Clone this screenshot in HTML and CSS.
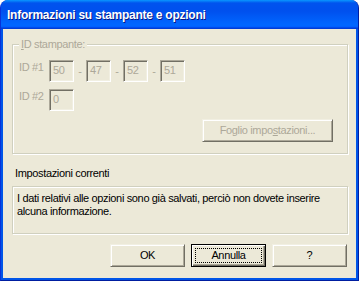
FILE: index.html
```html
<!DOCTYPE html>
<html>
<head>
<meta charset="utf-8">
<link rel="stylesheet" href="styles.css">
</head>
<body>
<div class="window">
  <div class="titlebar">Informazioni su stampante e opzioni</div>
  <div class="client">
    <div class="group">
      <span class="legend"><u>I</u>D stampante:</span>
      <div class="row row-first">
        <span class="lbl">ID #1</span>
        <span class="edit">50</span><span class="dash">-</span>
        <span class="edit">47</span><span class="dash">-</span>
        <span class="edit">52</span><span class="dash">-</span>
        <span class="edit">51</span>
      </div>
      <div class="row row-second">
        <span class="lbl">ID #2</span>
        <span class="edit">0</span>
      </div>
      <div class="group-actions">
        <button class="btn btn-disabled btn-wide">Foglio impo<u>s</u>tazioni...</button>
      </div>
    </div>
    <div class="section-label">Impostazioni correnti</div>
    <div class="infobox">I dati relativi alle opzioni sono già salvati, perciò non dovete inserire alcuna informazione.</div>
    <div class="actions">
      <button class="btn">OK</button>
      <button class="btn btn-default"><span class="focus">Annulla</span></button>
      <button class="btn">?</button>
    </div>
  </div>
</div>
</body>
</html>
```
FILE: styles.css
```css
html, body {
  margin: 0;
  padding: 0;
  background: #ffffff;
}
.window {
  width: 359px;
  height: 281px;
  box-sizing: border-box;
  display: flex;
  flex-direction: column;
  background: #0055e8;
  border-radius: 8px 8px 0 0;
  border-left: 1px solid #0831d9;
  border-right: 1px solid #001ea0;
  border-bottom: 1px solid #001ea0;
  overflow: hidden;
  font-family: "Liberation Sans", Arial, sans-serif;
  font-size: 11px;
  letter-spacing: -0.35px;
}
.titlebar {
  height: 29px;
  flex: none;
  box-sizing: border-box;
  padding: 7px 0 0 6px;
  background: linear-gradient(180deg, #0997ff 0, #0053ee 3px, #0050ee 11px, #0066ff 24px, #0066ff 26px, #005bff 27px, #003dd7 28px, #003dd7 29px);
  color: #ffffff;
  font-weight: bold;
  font-size: 12px;
  line-height: 16px;
  text-shadow: 1px 1px #0a1883;
  letter-spacing: -0.25px;
}
.client {
  flex: 1;
  margin: 0 2px 2px 2px;
  background: #ece9d8;
  display: flex;
  flex-direction: column;
  align-items: flex-start;
  color: #000000;
}
.group {
  position: relative;
  margin: 15px 0 0 9px;
  width: 336px;
  height: 110px;
  box-sizing: border-box;
  border: 1px solid #d0d0bf;
  box-shadow: inset 1px 1px #ffffff, 1px 1px #ffffff;
  padding: 0 0 0 6px;
  display: flex;
  flex-direction: column;
}
.legend {
  position: absolute;
  left: 6px;
  top: -7px;
  padding: 0 2px 0 2px;
  background: #ece9d8;
  color: #aca899;
  line-height: 13px;
}
.row {
  display: flex;
  align-items: flex-start;
  height: 22px;
  color: #aca899;
}
.row-first {
  margin-top: 15px;
}
.row-second {
  margin-top: 7px;
}
.lbl {
  width: 30px;
  line-height: 13px;
  padding-top: 1px;
}
.edit {
  width: 25px;
  height: 22px;
  box-sizing: border-box;
  border-style: solid;
  border-width: 1px;
  border-color: #aca899 #ffffff #ffffff #aca899;
  box-shadow: inset 1px 1px #716f64, inset -1px -1px #f1efe2;
  padding: 3px 0 0 3px;
  line-height: 13px;
  color: #aca899;
}
.dash {
  width: 12px;
  text-align: center;
  line-height: 13px;
  padding-top: 5px;
}
.group-actions {
  display: flex;
  justify-content: flex-end;
  margin-top: 8px;
  padding-right: 14px;
}
.btn {
  font-family: "Liberation Sans", Arial, sans-serif;
  font-size: 11px;
  letter-spacing: -0.35px;
  color: #000000;
  width: 75px;
  height: 23px;
  box-sizing: border-box;
  padding: 0;
  margin: 0;
  background: #ece9d8;
  border-style: solid;
  border-width: 1px;
  border-color: #f1efe2 #716f64 #716f64 #f1efe2;
  box-shadow: inset 1px 1px #ffffff, inset -1px -1px #aca899;
  line-height: 13px;
}
.btn-wide {
  width: 131px;
}
.btn-disabled {
  color: #aca899;
  text-shadow: none;
}
.btn-default {
  border-color: #000000;
  box-shadow: inset 1px 1px #ffffff, inset -1px -1px #716f64, inset -2px -2px #aca899;
  display: flex;
  align-items: stretch;
  padding: 3px;
}
.focus {
  flex: 1;
  border: 1px dotted #000000;
  display: flex;
  align-items: center;
  justify-content: center;
}
.section-label {
  margin: 13px 0 0 12px;
  line-height: 13px;
}
.infobox {
  margin: 6px 0 0 9px;
  width: 336px;
  height: 48px;
  box-sizing: border-box;
  border: 1px solid #d0d0bf;
  box-shadow: inset 1px 1px #ffffff, 1px 1px #ffffff;
  padding: 5px 4px 0 4px;
  line-height: 13px;
}
.actions {
  margin: 10px 0 0 107px;
  display: flex;
  gap: 6px;
}
```
